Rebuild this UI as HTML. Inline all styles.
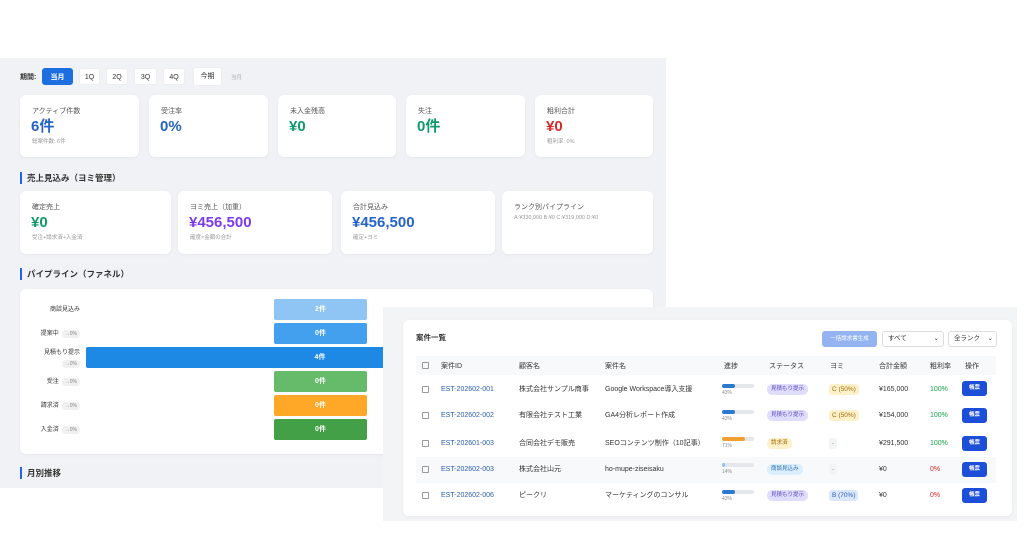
<!DOCTYPE html>
<html><head><meta charset="utf-8"><style>
*{box-sizing:border-box;margin:0;padding:0}
body{width:1024px;height:538px;background:#fff;font-family:"Liberation Sans","Noto Sans CJK JP",sans-serif;position:relative;overflow:hidden;color:#333}
.a{position:absolute}
.card{position:absolute;background:#fff;border-radius:6px;box-shadow:0 1px 3px rgba(0,0,0,.05)}
.lbl{position:absolute;left:12px;top:12px;font-size:7px;color:#555;line-height:9px}
.val{position:absolute;left:11px;top:23px;font-size:15px;font-weight:bold;line-height:18px}
.sub{position:absolute;left:12px;top:44px;font-size:5.5px;color:#999;line-height:7px}
.btn{position:absolute;top:68px;height:17px;background:#fff;border-radius:3px;font-size:7px;text-align:center;line-height:17px;color:#333;border:1px solid #eee}
.sec{position:absolute;left:20px;font-size:8.5px;font-weight:bold;border-left:2px solid #2563eb;padding-left:5px;height:12px;line-height:12px}
.bar{position:absolute;height:21px;border-radius:2px;color:#fff;font-size:7px;font-weight:bold;text-align:center;line-height:21px}
.fl{position:absolute;font-size:6px;color:#333;text-align:right;width:80px;left:0;line-height:9px}
.pct{display:inline-block;background:#f0f0f0;border-radius:6px;padding:0 3px;color:#888;font-size:5px;margin-left:3px;line-height:8px}
.th{position:absolute;top:362px;font-size:7px;color:#333;line-height:9px}
.td{position:absolute;font-size:7px;color:#333;line-height:9px}
.id{color:#2a5db0}
.cb{position:absolute;left:422px;width:7px;height:7px;border:1px solid #999;border-radius:1px}
.pb{position:absolute;left:722px;width:32px;height:4px;background:#e5e7eb;border-radius:2px}
.pbf{height:4px;border-radius:2px}
.pl{position:absolute;left:722px;font-size:5px;color:#888;line-height:6px}
.st{position:absolute;left:767px;height:11px;border-radius:5px;font-size:5.5px;line-height:11px;padding:0 4px}
.ym{position:absolute;left:829px;height:11px;border-radius:3px;font-size:6.5px;line-height:11px;padding:0 3px}
.ed{position:absolute;left:962px;width:25px;height:15px;background:#1d4ed8;border-radius:3px;color:#fff;font-size:5.5px;text-align:center;line-height:15px;font-weight:bold}
</style></head><body>
<div class="a" style="left:0;top:58px;width:666px;height:430px;background:#f0f2f5"></div>
<div class="a" style="left:20px;top:72px;font-size:7px;font-weight:bold">期間:</div>
<div class="btn" style="left:42px;width:31px;background:#1d6fe0;color:#fff;border-color:#1d6fe0;font-weight:bold">当月</div>
<div class="btn" style="left:79px;width:21px">1Q</div>
<div class="btn" style="left:106px;width:22px">2Q</div>
<div class="btn" style="left:134px;width:23px">3Q</div>
<div class="btn" style="left:163px;width:22px">4Q</div>
<div class="btn" style="left:193px;width:29px;height:19px;top:67px">今期</div>
<div class="a" style="left:231px;top:73px;font-size:5.5px;color:#aaa">当月</div>

<div class="card" style="left:20px;top:95px;width:119px;height:62px"><div class="lbl">アクティブ件数</div><div class="val" style="color:#2563c9">6件</div><div class="sub">総案件数: 6件</div></div>
<div class="card" style="left:149px;top:95px;width:119px;height:62px"><div class="lbl">受注率</div><div class="val" style="color:#2563c9">0%</div></div>
<div class="card" style="left:278px;top:95px;width:118px;height:62px"><div class="lbl">未入金残高</div><div class="val" style="color:#0f9a6a">¥0</div></div>
<div class="card" style="left:406px;top:95px;width:119px;height:62px"><div class="lbl">失注</div><div class="val" style="color:#0f9a6a">0件</div></div>
<div class="card" style="left:535px;top:95px;width:118px;height:62px"><div class="lbl">粗利合計</div><div class="val" style="color:#d42a2a">¥0</div><div class="sub">粗利率: 0%</div></div>

<div class="sec" style="top:172px">売上見込み（ヨミ管理）</div>
<div class="card" style="left:20px;top:191px;width:151px;height:63px"><div class="lbl">確定売上</div><div class="val" style="color:#0f9a6a">¥0</div><div class="sub">受注+請求済+入金済</div></div>
<div class="card" style="left:178px;top:191px;width:154px;height:63px"><div class="lbl">ヨミ売上（加重）</div><div class="val" style="color:#7c3aed">¥456,500</div><div class="sub">確度×金額の合計</div></div>
<div class="card" style="left:341px;top:191px;width:154px;height:63px"><div class="lbl">合計見込み</div><div class="val" style="color:#2563c9">¥456,500</div><div class="sub">確定+ヨミ</div></div>
<div class="card" style="left:502px;top:191px;width:151px;height:63px"><div class="lbl">ランク別パイプライン</div><div class="a" style="left:12px;top:24px;font-size:5.5px;color:#999">A:¥330,000 B:¥0 C:¥319,000 D:¥0</div></div>

<div class="sec" style="top:268px">パイプライン（ファネル）</div>
<div class="card" style="left:20px;top:289px;width:633px;height:165px"></div>
<div class="fl" style="top:306px">商談見込み</div>
<div class="fl" style="top:330px">提案中<span class="pct">→0%</span></div>
<div class="fl" style="top:348px;line-height:11px">見積もり提示<br><span class="pct">→0%</span></div>
<div class="fl" style="top:378px">受注<span class="pct">→0%</span></div>
<div class="fl" style="top:402px">請求済<span class="pct">→0%</span></div>
<div class="fl" style="top:426px">入金済<span class="pct">→0%</span></div>
<div class="bar" style="left:274px;width:93px;top:299px;background:#8ec5f5">2件</div>
<div class="bar" style="left:274px;width:93px;top:323px;background:#42a0ef">0件</div>
<div class="bar" style="left:86px;width:468px;top:347px;background:#1e88e5">4件</div>
<div class="bar" style="left:274px;width:93px;top:371px;background:#66bb6a">0件</div>
<div class="bar" style="left:274px;width:93px;top:395px;background:#ffa726">0件</div>
<div class="bar" style="left:274px;width:93px;top:419px;background:#43a047">0件</div>
<div class="sec" style="top:467px">月別推移</div>

<div class="a" style="left:383px;top:307px;width:634px;height:214px;background:#f3f4f6"></div>
<div class="card" style="left:403px;top:320px;width:609px;height:196px"></div>
<div class="a" style="left:416px;top:332px;font-size:7.5px;font-weight:bold">案件一覧</div>
<div class="a" style="left:822px;top:331px;width:55px;height:16px;background:#93b4f0;border-radius:3px;color:#fff;font-size:5.5px;text-align:center;line-height:16px">一括請求書生成</div>
<div class="a" style="left:882px;top:331px;width:62px;height:16px;border:1px solid #ddd;border-radius:3px;background:#fff;font-size:6.5px;line-height:14px;padding-left:5px">すべて<span style="position:absolute;right:4px">⌄</span></div>
<div class="a" style="left:948px;top:331px;width:49px;height:16px;border:1px solid #ddd;border-radius:3px;background:#fff;font-size:6.5px;line-height:14px;padding-left:5px">全ランク<span style="position:absolute;right:3px">⌄</span></div>
<div class="a" style="left:416px;top:356px;width:580px;height:19px;background:#f8f9fa"></div>
<div class="cb" style="top:362px"></div>
<div class="th" style="left:441px">案件ID</div><div class="th" style="left:519px">顧客名</div><div class="th" style="left:605px">案件名</div><div class="th" style="left:724px">進捗</div><div class="th" style="left:769px">ステータス</div><div class="th" style="left:830px">ヨミ</div><div class="th" style="left:879px">合計金額</div><div class="th" style="left:930px">粗利率</div><div class="th" style="left:965px">操作</div>
<div class="a" style="left:416px;top:457px;width:580px;height:26px;background:#f8f9fa"></div>

<!-- row1 -->
<div class="cb" style="top:386px"></div><div class="td id" style="left:441px;top:385px">EST-202602-001</div><div class="td" style="left:519px;top:385px">株式会社サンプル商事</div><div class="td" style="left:605px;top:385px">Google Workspace導入支援</div>
<div class="pb" style="top:384px"><div class="pbf" style="width:13px;background:#2a7bd0"></div></div><div class="pl" style="top:390px">43%</div>
<div class="st" style="top:384px;background:#e0dcfb;color:#5b4bc4">見積もり提示</div><div class="ym" style="top:384px;background:#fdf1cc;color:#a36a00">C (50%)</div><div class="td" style="left:879px;top:385px">¥165,000</div><div class="td" style="left:930px;top:385px;color:#16a34a">100%</div><div class="ed" style="top:381px">帳票</div>
<!-- row2 -->
<div class="cb" style="top:412px"></div><div class="td id" style="left:441px;top:411px">EST-202602-002</div><div class="td" style="left:519px;top:411px">有限会社テスト工業</div><div class="td" style="left:605px;top:411px">GA4分析レポート作成</div>
<div class="pb" style="top:410px"><div class="pbf" style="width:13px;background:#2a7bd0"></div></div><div class="pl" style="top:416px">43%</div>
<div class="st" style="top:410px;background:#e0dcfb;color:#5b4bc4">見積もり提示</div><div class="ym" style="top:410px;background:#fdf1cc;color:#a36a00">C (50%)</div><div class="td" style="left:879px;top:411px">¥154,000</div><div class="td" style="left:930px;top:411px;color:#16a34a">100%</div><div class="ed" style="top:408px">帳票</div>
<!-- row3 -->
<div class="cb" style="top:440px"></div><div class="td id" style="left:441px;top:439px">EST-202601-003</div><div class="td" style="left:519px;top:439px">合同会社デモ販売</div><div class="td" style="left:605px;top:439px">SEOコンテンツ制作（10記事）</div>
<div class="pb" style="top:437px"><div class="pbf" style="width:23px;background:#f0a030"></div></div><div class="pl" style="top:443px">71%</div>
<div class="st" style="top:438px;background:#fdf1cc;color:#a36a00">請求済</div><div class="ym" style="top:438px;background:#f3f4f6;color:#999">-</div><div class="td" style="left:879px;top:439px">¥291,500</div><div class="td" style="left:930px;top:439px;color:#16a34a">100%</div><div class="ed" style="top:436px">帳票</div>
<!-- row4 -->
<div class="cb" style="top:466px"></div><div class="td id" style="left:441px;top:465px">EST-202602-003</div><div class="td" style="left:519px;top:465px">株式会社山元</div><div class="td" style="left:605px;top:465px">ho-mupe-ziseisaku</div>
<div class="pb" style="top:463px"><div class="pbf" style="width:3px;background:#8ec5f5"></div></div><div class="pl" style="top:469px">14%</div>
<div class="st" style="top:464px;background:#dbeefd;color:#2a6fb0">商談見込み</div><div class="ym" style="top:464px;background:#f3f4f6;color:#999">-</div><div class="td" style="left:879px;top:465px">¥0</div><div class="td" style="left:930px;top:465px;color:#dc2626">0%</div><div class="ed" style="top:462px">帳票</div>
<!-- row5 -->
<div class="cb" style="top:492px"></div><div class="td id" style="left:441px;top:491px">EST-202602-006</div><div class="td" style="left:519px;top:491px">ピークリ</div><div class="td" style="left:605px;top:491px">マーケティングのコンサル</div>
<div class="pb" style="top:490px"><div class="pbf" style="width:13px;background:#2a7bd0"></div></div><div class="pl" style="top:496px">43%</div>
<div class="st" style="top:490px;background:#e0dcfb;color:#5b4bc4">見積もり提示</div><div class="ym" style="top:490px;background:#dbe7fd;color:#2a5db0">B (70%)</div><div class="td" style="left:879px;top:491px">¥0</div><div class="td" style="left:930px;top:491px;color:#dc2626">0%</div><div class="ed" style="top:488px">帳票</div>
</body></html>
